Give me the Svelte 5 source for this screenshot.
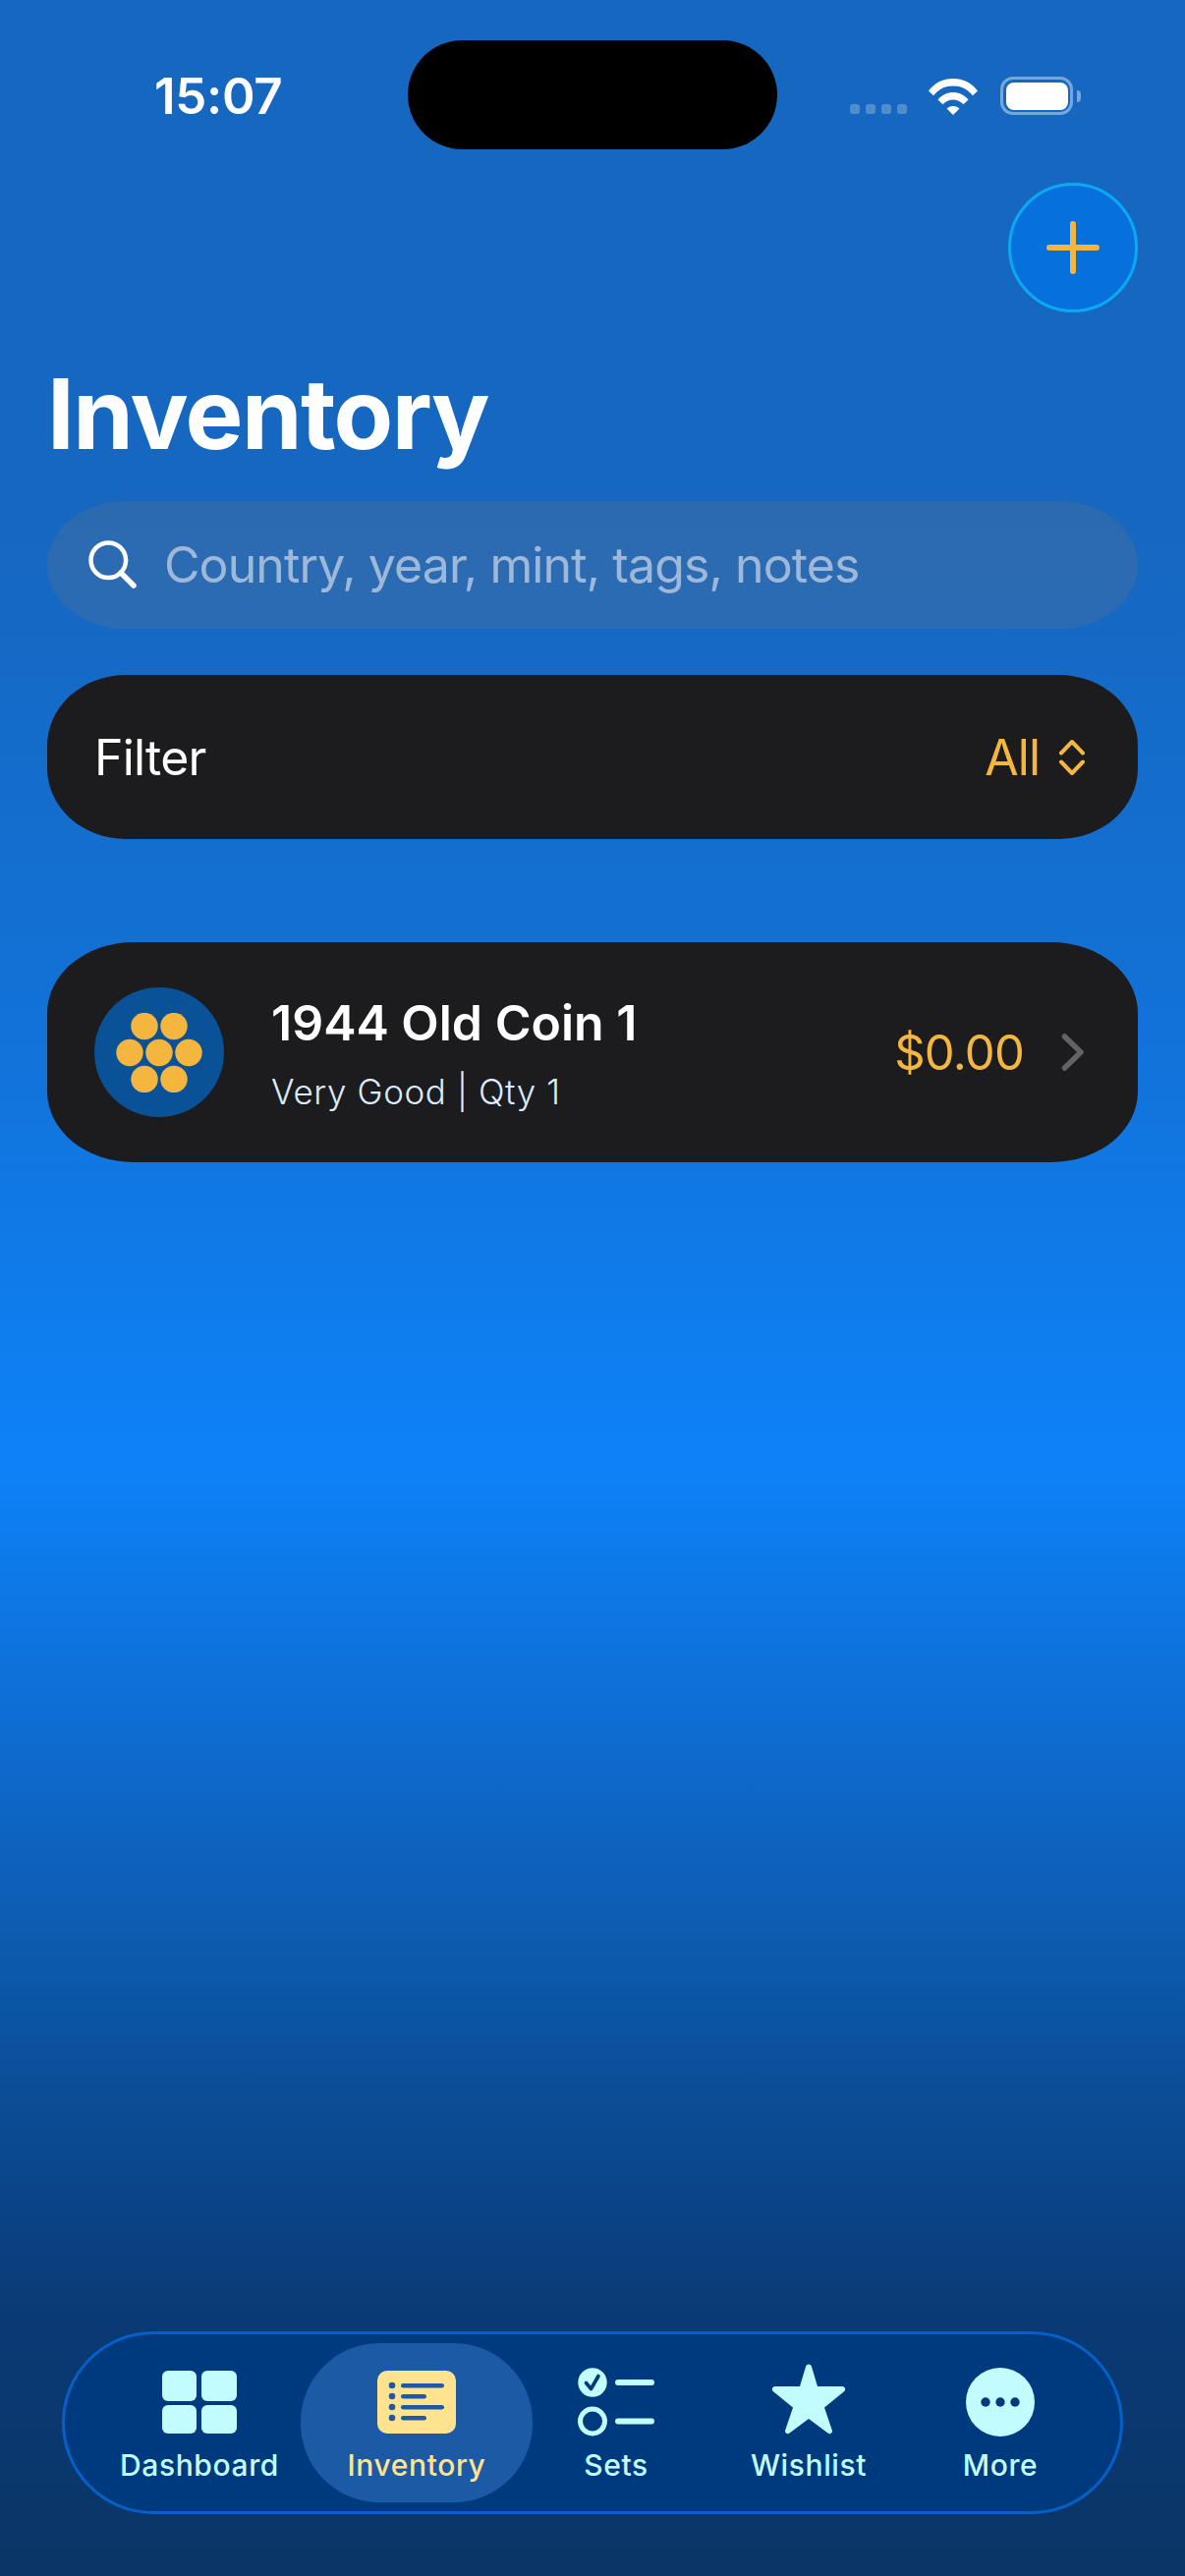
<script lang="ts">
  // Inventory screen: status bar, add button, search, filter, one coin row, floating tab bar.
  const coins = [
    { cx: 29, cy: 13.5 }, { cx: 59, cy: 13.5 },
    { cx: 14, cy: 40.5 }, { cx: 44, cy: 40.5 }, { cx: 74, cy: 40.5 },
    { cx: 29, cy: 67.5 }, { cx: 59, cy: 67.5 }
  ];
  const tabs = [
    { id: 'dash', label: 'Dashboard' },
    { id: 'inv', label: 'Inventory', active: true },
    { id: 'sets', label: 'Sets' },
    { id: 'wish', label: 'Wishlist' },
    { id: 'more', label: 'More' }
  ];
</script>

<div class="screen">
  <div class="status">
    <span class="time">15:07</span>
    <div class="island"></div>
    <div class="sys">
      <div class="signal"><i></i><i></i><i></i><i></i></div>
      <svg class="wifi" width="50" height="38" viewBox="0 0 50 38">
        <path d="M0 13.5C6.500 5 15 1 25 1s18.500 4 25 12.500l-5 4.800C39.500 11.500 33 8.500 25 8.500S10.500 11.500 5 18.300z" fill="#fff"/>
        <path d="M9.500 22.500C13.500 17.500 19 15 25 15s11.500 2.500 15.500 7.500l-5 4.800C32.500 24 29 22.500 25 22.500s-7.500 1.500-10.500 4.800z" fill="#fff"/>
        <path d="M18.500 31.500c2-1.700 4-2.500 6.500-2.500s4.500.8 6.500 2.500L25 38z" fill="#fff"/>
      </svg>
      <div class="battery"><div class="cell"></div></div>
      <div class="nub"></div>
    </div>
  </div>

  <div class="actions">
    <button class="add" aria-label="Add">
      <svg width="54" height="54" viewBox="0 0 54 54">
        <path d="M27 3v48M3 27h48" stroke="#f4b63f" stroke-width="6" stroke-linecap="round"/>
      </svg>
    </button>
  </div>

  <h1>Inventory</h1>

  <div class="search">
    <svg width="50" height="50" viewBox="0 0 50 50" fill="none" stroke="#fff" stroke-linecap="round">
      <circle cx="20.300" cy="20.300" r="17.800" stroke-width="4.500"/>
      <path d="M33 33L46 46" stroke-width="5.500"/>
    </svg>
    <span>Country, year, mint, tags, notes</span>
  </div>

  <div class="filter">
    <span class="filter-label">Filter</span>
    <div class="filter-value">
      <span>All</span>
      <svg width="28" height="38" viewBox="0 0 28 38" fill="none" stroke="#f4b63f" stroke-width="4" stroke-linecap="round" stroke-linejoin="round">
        <path d="M3 14.500L14 3l11 11.500M3 23.500L14 35l11-11.500"/>
      </svg>
    </div>
  </div>

  <div class="row">
    <div class="thumb">
      <svg width="88" height="81" viewBox="0 0 88 81">
        {#each coins as c}
          <circle cx={c.cx} cy={c.cy} r="13.700" fill="#f4b63f"/>
        {/each}
      </svg>
    </div>
    <div class="row-text">
      <div class="row-title">1944 Old Coin 1</div>
      <div class="row-sub">Very Good | Qty 1</div>
    </div>
    <span class="price">$0.00</span>
    <svg class="chev" width="24" height="38" viewBox="0 0 24 38" fill="none" stroke="#636366" stroke-width="5.500" stroke-linecap="round" stroke-linejoin="round">
      <path d="M3.500 3L20 19 3.500 35"/>
    </svg>
  </div>

  <div class="spacer"></div>

  <nav class="tabbar">
    {#each tabs as t}
      <div class="tab {t.id}" class:active={t.active}>
        <div class="icon">
          {#if t.id === 'dash'}
            <svg width="76" height="64" viewBox="0 0 76 64" fill="#c2fcff">
              <rect x="0" y="0" width="35" height="31" rx="6"/>
              <rect x="40" y="0" width="36" height="31" rx="6"/>
              <rect x="0" y="35" width="35" height="29" rx="6"/>
              <rect x="40" y="35" width="36" height="29" rx="6"/>
            </svg>
          {:else if t.id === 'inv'}
            <svg width="80" height="64" viewBox="0 0 80 64">
              <rect width="80" height="64" rx="10" fill="#ffe38f"/>
              <g fill="#1d5aa5">
                <circle cx="15" cy="15" r="3.300"/><circle cx="15" cy="26" r="3.300"/>
                <circle cx="15" cy="37" r="3.300"/><circle cx="15" cy="48" r="3.300"/>
                <rect x="24" y="13" width="44" height="4.400" rx="2.200"/>
                <rect x="24" y="24" width="26" height="4.400" rx="2.200"/>
                <rect x="24" y="35" width="44" height="4.400" rx="2.200"/>
                <rect x="24" y="46" width="26" height="4.400" rx="2.200"/>
              </g>
            </svg>
          {:else if t.id === 'sets'}
            <svg width="78" height="70" viewBox="0 0 78 70">
              <circle cx="15" cy="15" r="14.700" fill="#c2fcff"/>
              <path d="M8.500 15.500l5 6L21 8.500" fill="none" stroke="#003a7e" stroke-width="3.600" stroke-linecap="round" stroke-linejoin="round"/>
              <circle cx="15" cy="54.500" r="12.500" fill="none" stroke="#c2fcff" stroke-width="5"/>
              <rect x="38" y="12" width="40" height="6" rx="3" fill="#c2fcff"/>
              <rect x="38" y="51.500" width="40" height="6" rx="3" fill="#c2fcff"/>
            </svg>
          {:else if t.id === 'wish'}
            <svg width="78" height="74" viewBox="0 0 78 74">
              <path d="M39 2.500c1.500 0 2.600 1 3 2.400L48 25h25c3 0 4.300 3.400 2 5.300L55 46.500l7.800 23c.9 2.700-2 4.800-4.300 3.100L39 58 19.500 72.600c-2.300 1.700-5.200-.4-4.300-3.100l7.800-23L3 30.300C.7 28.400 2 25 5 25h25l6-20.100c.4-1.400 1.500-2.400 3-2.400z" fill="#c2fcff"/>
            </svg>
          {:else}
            <svg width="70" height="70" viewBox="0 0 70 70">
              <circle cx="35" cy="35" r="35" fill="#c2fcff"/>
              <circle cx="20" cy="35" r="4.700" fill="#003a7e"/>
              <circle cx="35" cy="35" r="4.700" fill="#003a7e"/>
              <circle cx="50" cy="35" r="4.700" fill="#003a7e"/>
            </svg>
          {/if}
        </div>
        <span class="tab-label">{t.label}</span>
      </div>
    {/each}
  </nav>
</div>

<style>
  :global(body) {
    margin: 0;
  }

  .screen {
    width: 1206px;
    height: 2622px;
    box-sizing: border-box;
    padding: 0 48px;
    display: flex;
    flex-direction: column;
    overflow: hidden;
    font-family: Inter, "Liberation Sans", sans-serif;
    background: linear-gradient(180deg, #1667bf 0%, #1667bf 20%, #1272d8 40%, #0d82f8 57%, #0e6fd6 66%, #0c57a8 77%, #0a3a75 90%, #0a3566 100%);
  }

  .status {
    height: 152px;
    margin: 0 -48px;
    padding: 41px 0 0 157px;
    box-sizing: border-box;
    display: flex;
    align-items: flex-start;
    flex-shrink: 0;
  }

  .time {
    width: 258px;
    margin-top: 29px;
    font-size: 51px;
    line-height: 56px;
    font-weight: 600;
    letter-spacing: -0.3px;
    color: #fff;
  }

  .island {
    width: 376px;
    height: 111px;
    border-radius: 56px;
    background: #000;
  }

  .sys {
    margin: 38px 0 0 74px;
    display: flex;
    align-items: flex-start;
  }

  .signal {
    display: flex;
    gap: 6px;
    margin-top: 27px;
  }

  .signal i {
    width: 10px;
    height: 10px;
    border-radius: 3px;
    background: rgba(255, 255, 255, 0.25);
  }

  .wifi {
    margin-left: 22px;
  }

  .battery {
    width: 74px;
    height: 39px;
    margin: -1px 0 0 23px;
    box-sizing: border-box;
    border: 3.500px solid rgba(255, 255, 255, 0.42);
    border-radius: 13px;
    padding: 2.500px;
  }

  .cell {
    width: 100%;
    height: 100%;
    border-radius: 8px;
    background: #fff;
  }

  .nub {
    width: 4px;
    height: 12px;
    margin: 13px 0 0 4px;
    border-radius: 0 4px 4px 0;
    background: rgba(255, 255, 255, 0.42);
  }

  .actions {
    display: flex;
    justify-content: flex-end;
    margin-top: 34px;
  }

  .add {
    width: 132px;
    height: 132px;
    padding: 0;
    box-sizing: border-box;
    border-radius: 50%;
    border: 3px solid #0aa9f2;
    background: #0670dd;
    display: flex;
    align-items: center;
    justify-content: center;
  }

  h1 {
    margin: 42px 0 0;
    font-size: 99px;
    line-height: 123px;
    font-weight: 700;
    letter-spacing: -1.600px;
    color: #fff;
  }

  .search {
    height: 130px;
    margin-top: 27px;
    padding: 0 0 0 42px;
    border-radius: 80px / 65px;
    background: rgba(118, 118, 128, 0.24);
    display: flex;
    align-items: center;
    gap: 27px;
    flex-shrink: 0;
  }

  .search span {
    font-size: 50px;
    letter-spacing: -0.9px;
    color: rgba(235, 235, 245, 0.6);
    font-weight: 400;
  }

  .filter {
    height: 167px;
    margin-top: 47px;
    padding: 0 53px 0 48px;
    border-radius: 80px / 72px;
    background: #1c1c1e;
    display: flex;
    align-items: center;
    justify-content: space-between;
    flex-shrink: 0;
  }

  .filter-label {
    font-size: 50px;
    letter-spacing: -0.8px;
    color: #fff;
  }

  .filter-value {
    display: flex;
    align-items: center;
    gap: 19px;
    font-size: 50px;
    letter-spacing: -1px;
    color: #f4b63f;
  }

  .row {
    height: 224px;
    margin-top: 105px;
    padding: 0 54px 0 48px;
    border-radius: 88px / 72px;
    background: #1c1c1e;
    display: flex;
    align-items: center;
    flex-shrink: 0;
  }

  .thumb {
    width: 132px;
    height: 132px;
    border-radius: 50%;
    background: #0a5298;
    display: flex;
    align-items: center;
    justify-content: center;
    flex-shrink: 0;
  }

  .row-text {
    flex: 1;
    margin-left: 48px;
  }

  .row-title {
    font-size: 50px;
    line-height: 60px;
    font-weight: 600;
    color: #fff;
  }

  .row-sub {
    margin-top: 19px;
    font-size: 35px;
    line-height: 42px;
    letter-spacing: 0.6px;
    font-weight: 300;
    color: #dcebfd;
  }

  .price {
    font-size: 49px;
    letter-spacing: -0.8px;
    color: #f4b63f;
  }

  .chev {
    margin-left: 38px;
  }

  .spacer {
    flex: 1;
  }

  .tabbar {
    height: 186px;
    margin: 0 15px 63px;
    box-sizing: border-box;
    border: 3px solid #0660c8;
    border-radius: 93px;
    background: #003a7e;
    display: flex;
    align-items: stretch;
    padding: 9px 0 9px 34px;
    flex-shrink: 0;
  }

  .tab {
    display: flex;
    flex-direction: column;
    align-items: center;
    color: #c2fcff;
    flex-shrink: 0;
  }

  .tab.dash { width: 206px; }
  .tab.inv { width: 236px; }
  .tab.sets { width: 170px; }
  .tab.wish { width: 222px; }
  .tab.more { width: 168px; }

  .tab.active {
    background: #1d5aa5;
    border-radius: 80px;
    color: #ffe38f;
  }

  .icon {
    height: 92px;
    display: flex;
    align-items: flex-end;
    justify-content: center;
  }

  .tab.sets .icon svg, .tab.more .icon svg {
    margin-bottom: -3px;
  }

  .tab.wish .icon svg {
    margin-bottom: -1px;
  }

  .tab-label {
    margin-top: 14px;
    font-size: 30px;
    line-height: 36px;
    font-weight: 450;
    letter-spacing: 0.6px;
  }
</style>
